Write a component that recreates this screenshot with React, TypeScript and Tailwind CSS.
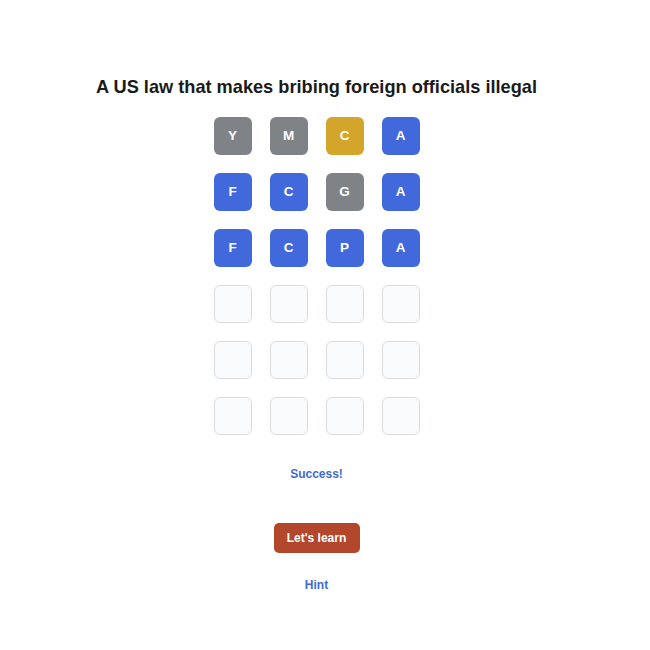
import React from 'react';

type Cell = { letter: string; state: 'absent' | 'present' | 'correct' };

const guesses: Cell[][] = [
  [
    { letter: 'Y', state: 'absent' },
    { letter: 'M', state: 'absent' },
    { letter: 'C', state: 'present' },
    { letter: 'A', state: 'correct' },
  ],
  [
    { letter: 'F', state: 'correct' },
    { letter: 'C', state: 'correct' },
    { letter: 'G', state: 'absent' },
    { letter: 'A', state: 'correct' },
  ],
  [
    { letter: 'F', state: 'correct' },
    { letter: 'C', state: 'correct' },
    { letter: 'P', state: 'correct' },
    { letter: 'A', state: 'correct' },
  ],
];

const stateClass = {
  absent: 'bg-[#7f8388]',
  present: 'bg-[#d4a52b]',
  correct: 'bg-[#4169db]',
};

export default function App() {
  const emptyRows = 6 - guesses.length;

  return (
    <div className="min-h-[650px] w-[633px] bg-white flex flex-col items-center font-['Liberation_Sans',Arial,sans-serif]">
      <h1 className="mt-[75px] text-[18.2px] leading-[24px] font-bold text-[#1a1a1a]">
        A US law that makes bribing foreign officials illegal
      </h1>

      {/* Board */}
      <div className="mt-[18px] flex flex-col gap-[18px]">
        {guesses.map((row, i) => (
          <div key={i} className="flex gap-[18px]">
            {row.map((cell, j) => (
              <div
                key={j}
                className={`w-[38px] h-[38px] rounded-[6px] flex items-center justify-center text-white text-[13.5px] font-bold ${stateClass[cell.state]}`}
              >
                {cell.letter}
              </div>
            ))}
          </div>
        ))}
        {Array.from({ length: emptyRows }).map((_, i) => (
          <div key={i} className="flex gap-[18px]">
            {[0, 1, 2, 3].map((j) => (
              <div
                key={j}
                className="w-[38px] h-[38px] rounded-[6px] border border-[#dcdcdc] bg-[#fafbfc]"
              />
            ))}
          </div>
        ))}
      </div>

      <p className="mt-[31px] text-[12px] leading-[16px] font-bold text-[#3e6bd3]">Success!</p>

      <button className="mt-[41px] w-[86px] h-[30px] rounded-[5px] bg-[#b3472c] text-white text-[12px] font-bold">
        Let's learn
      </button>

      <p className="mt-[24px] text-[12px] leading-[16px] font-bold text-[#3e6bd3]">Hint</p>
    </div>
  );
}
